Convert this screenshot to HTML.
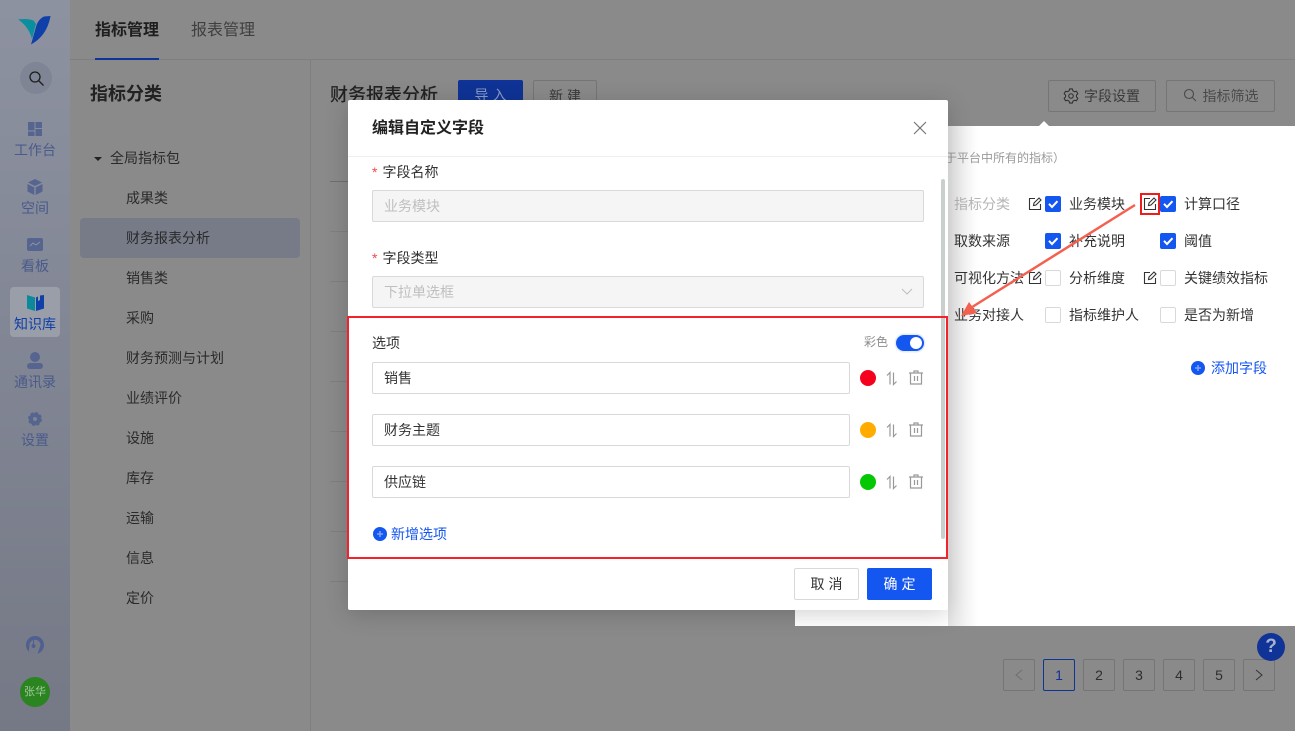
<!DOCTYPE html>
<html lang="zh-CN"><head><meta charset="utf-8"><style>
*{box-sizing:border-box}
html,body{margin:0;padding:0}
body{width:1295px;height:731px;overflow:hidden;position:relative;background:#8a8a8a;font-family:"Liberation Sans","Noto Sans CJK SC",sans-serif;font-size:14px;color:#333}
.a{position:absolute;white-space:nowrap}
.side{left:0;top:0;width:70px;height:731px;background:linear-gradient(#8d92a1,#757986)}
.nav{left:0;width:70px;text-align:center;color:#4a5a8a;font-size:14px;line-height:20px}
.cat{left:126px;color:#2a2a2a;line-height:20px}
.line{height:1px;background:#7f7f7f}
.btn{border:1px solid #757575;border-radius:2px;text-align:center;color:#3a3a3a}
.modal{left:348px;top:100px;width:600px;height:510px;background:#fff;border-radius:2px;box-shadow:0 4px 24px rgba(0,0,0,.18)}
.panel{left:795px;top:126px;width:500px;height:500px;background:#fff}
.fade{left:948px;top:126px;width:30px;height:500px;background:linear-gradient(90deg,#e4e4e4,#fff)}
.lab{color:#333;line-height:20px}
.cb{width:16px;height:16px;border:1px solid #d9d9d9;border-radius:2px;background:#fff}
.cb.on{background:#1456f0;border-color:#1456f0}
.cb.on svg{display:block}
.ipt{left:372px;width:478px;height:32px;border:1px solid #d9d9d9;border-radius:2px;padding-left:11px;line-height:30px;color:#333;background:#fff}
.dis{width:552px;background:#f5f5f5;color:#bfbfbf}
.dot{left:860px;width:16px;height:16px;border-radius:50%}
.pg{top:659px;width:32px;height:32px;border:1px solid #757575;border-radius:2px;text-align:center;line-height:30px;color:#2e2e2e;font-size:14px}
</style></head><body>
<div class="a side"></div>
<div class="a line" style="left:70px;top:59px;width:1225px"></div>
<div class="a" style="left:310px;top:60px;width:1px;height:671px;background:#7f7f7f"></div>
<svg class="a" style="left:17px;top:15px" width="35" height="31" viewBox="0 0 35 31"><path d="M1 4.500 C7 3.500 13 4 16.500 5.500 L19 9 L15 24 C13 16 8 9 1 4.500Z" fill="#0a8f9f"/><path d="M33.500 1 L27 1.500 C22 4 20 8 19 12 L14 29.500 C24 24 31 15 33.500 1Z" fill="#0f3fa8"/></svg>
<div class="a" style="left:20px;top:62px;width:32px;height:32px;border-radius:50%;background:#7f8595"></div>
<svg class="a" style="left:28px;top:70px" width="17" height="17" viewBox="0 0 17 17" fill="none" stroke="#1d1d1d" stroke-width="1.300"><circle cx="7" cy="7" r="5"/><path d="M11 11l4.500 4.500"/></svg>

<svg class="a" style="left:28px;top:122px" width="14" height="14"><path d="M0 0h6.500v8.500H0zM7.500 0H14v6H7.500zM7.500 7H14v7H7.500zM0 9.500h6.500V14H0z" fill="#56658f"/></svg>
<div class="a nav" style="top:140px">工作台</div>
<svg class="a" style="left:27px;top:179px" width="16" height="16"><path d="M8 0l7 3.500-7 3.500-7-3.500zM.5 5l6.800 3.400V16L.5 12.500zM15.500 5L8.700 8.400V16l6.800-3.500z" fill="#56658f"/></svg>
<div class="a nav" style="top:198px">空间</div>
<svg class="a" style="left:27px;top:238px" width="16" height="15"><path d="M2 0h12a2 2 0 0 1 2 2v9a2 2 0 0 1-2 2H2a2 2 0 0 1-2-2V2a2 2 0 0 1 2-2z" fill="#56658f"/><path d="M3 8l3-3 3 2 4-3" stroke="#8d93a3" fill="none"/></svg>
<div class="a nav" style="top:256px">看板</div>
<div class="a" style="left:10px;top:287px;width:50px;height:50px;border-radius:4px;background:#9a9ea8"></div>
<svg class="a" style="left:27px;top:295px" width="17" height="16"><path d="M0 0l8 2.500V16L0 13.500z" fill="#0a8a9a"/><path d="M9 2.500l2-1V6l2-1V.5l4-.5v13.500L9 16z" fill="#0f3fa8"/></svg>
<div class="a nav" style="top:314px;color:#0f3fa8">知识库</div>
<svg class="a" style="left:27px;top:352px" width="16" height="17"><circle cx="8" cy="5" r="5" fill="#56658f"/><rect y="11" width="16" height="6" rx="3" fill="#56658f"/></svg>
<div class="a nav" style="top:372px">通讯录</div>
<svg class="a" style="left:28px;top:412px" width="14" height="14"><circle cx="7" cy="7" r="4" fill="none" stroke="#56658f" stroke-width="4"/><circle cx="7" cy="7" r="6" fill="none" stroke="#56658f" stroke-width="2" stroke-dasharray="3 1.700"/></svg>
<div class="a nav" style="top:430px">设置</div>
<svg class="a" style="left:26px;top:636px" width="18" height="18"><circle cx="9" cy="9" r="9" fill="#4f5f90"/><path d="M2.500 18L3.500 9.500A5.500 5.500 0 0 1 14.500 9L11.500 18z" fill="#777b89"/><circle cx="7.500" cy="10" r="2" fill="#4f5f90"/><rect x="7" y="2" width="1" height="7" fill="#4f5f90"/></svg>
<div class="a" style="left:20px;top:677px;width:30px;height:30px;border-radius:50%;background:#2a8420;color:#a5c8a0;font-size:11px;line-height:30px;text-align:center">张华</div>

<div class="a" style="left:95px;top:20px;font-size:16px;font-weight:700;color:#1e1e1e;line-height:22px">指标管理</div>
<div class="a" style="left:95px;top:58px;width:64px;height:2px;background:#0f3396"></div>
<div class="a" style="left:191px;top:20px;font-size:16px;color:#3f3f3f;line-height:22px">报表管理</div>
<div class="a" style="left:90px;top:82px;font-size:18px;font-weight:700;color:#222;line-height:24px">指标分类</div>
<div class="a" style="left:94px;top:157px;width:0;height:0;border:4px solid transparent;border-top:4px solid #222;border-bottom:0"></div>
<div class="a" style="left:110px;top:148px;color:#2a2a2a;line-height:20px">全局指标包</div>
<div class="a" style="left:80px;top:218px;width:220px;height:40px;border-radius:4px;background:#777b88"></div>
<div class="a cat" style="top:188px">成果类</div>
<div class="a cat" style="top:228px">财务报表分析</div>
<div class="a cat" style="top:268px">销售类</div>
<div class="a cat" style="top:308px">采购</div>
<div class="a cat" style="top:348px">财务预测与计划</div>
<div class="a cat" style="top:388px">业绩评价</div>
<div class="a cat" style="top:428px">设施</div>
<div class="a cat" style="top:468px">库存</div>
<div class="a cat" style="top:508px">运输</div>
<div class="a cat" style="top:548px">信息</div>
<div class="a cat" style="top:588px">定价</div>

<div class="a" style="left:330px;top:83px;font-size:18px;font-weight:500;color:#222;line-height:24px">财务报表分析</div>
<div class="a" style="left:458px;top:80px;width:65px;height:32px;border-radius:2px;background:#0f3396;color:#8a9bc8;text-align:center;line-height:30px;letter-spacing:4px;padding-left:4px">导入</div>
<div class="a btn" style="left:533px;top:80px;width:64px;height:32px;line-height:30px;letter-spacing:4px;padding-left:4px">新建</div>
<div class="a line" style="left:330px;top:181px;width:20px;background:#6f6f6f"></div>
<div class="a line" style="left:330px;top:231px;width:20px"></div>
<div class="a line" style="left:330px;top:281px;width:20px"></div>
<div class="a line" style="left:330px;top:331px;width:20px"></div>
<div class="a line" style="left:330px;top:381px;width:20px"></div>
<div class="a line" style="left:330px;top:431px;width:20px"></div>
<div class="a line" style="left:330px;top:481px;width:20px"></div>
<div class="a line" style="left:330px;top:531px;width:20px"></div>
<div class="a line" style="left:330px;top:581px;width:20px"></div>

<div class="a btn" style="left:1048px;top:80px;width:108px;height:32px;line-height:30px;padding-left:20px">字段设置</div>
<svg class="a" style="left:1063px;top:88px" width="16" height="16" viewBox="0 0 16 17" fill="none" stroke="#2e2e2e" stroke-width="1.100" stroke-linejoin="round"><path d="M6.500 1H9.500L10 3L11.800 4L13.800 3.400L15.300 6L13.800 7.500V9.500L15.300 11L13.800 13.600L11.800 13L10 14L9.500 16H6.500L6 14L4.200 13L2.200 13.600L.7 11L2.200 9.500V7.500L.7 6L2.200 3.400L4.200 4L6 3Z"/><circle cx="8" cy="8.500" r="2.400"/></svg>
<div class="a btn" style="left:1166px;top:80px;width:109px;height:32px;line-height:30px;padding-left:20px;color:#4a4a4a">指标筛选</div>
<svg class="a" style="left:1183px;top:88px" width="14" height="14" viewBox="0 0 14 14" fill="none" stroke="#4a4a4a" stroke-width="1.100"><circle cx="6" cy="6" r="4.500"/><path d="M9.500 9.500L13 13"/></svg>

<div class="a" style="left:1039px;top:121px;width:0;height:0;border:5px solid transparent;border-bottom:5px solid #fff;border-top:0"></div>
<div class="a panel"></div>
<div class="a fade"></div>
<div class="a" style="left:948px;top:150px;font-size:12px;color:#9a9a9a;line-height:16px;overflow:hidden;width:130px"><span style="margin-left:-3px">于平台中所有的指标）</span></div>

<div class="a lab" style="left:954px;top:194px;color:#b5b5b5">指标分类</div>
<div class="a lab" style="left:1069px;top:194px">业务模块</div>
<div class="a lab" style="left:1184px;top:194px">计算口径</div>
<div class="a lab" style="left:954px;top:231px">取数来源</div>
<div class="a lab" style="left:1069px;top:231px">补充说明</div>
<div class="a lab" style="left:1184px;top:231px">阈值</div>
<div class="a lab" style="left:954px;top:268px">可视化方法</div>
<div class="a lab" style="left:1069px;top:268px">分析维度</div>
<div class="a lab" style="left:1184px;top:268px">关键绩效指标</div>
<div class="a lab" style="left:954px;top:305px">业务对接人</div>
<div class="a lab" style="left:1069px;top:305px">指标维护人</div>
<div class="a lab" style="left:1184px;top:305px">是否为新增</div>

<div class="a cb on" style="left:1045px;top:196px"><svg width="14" height="14"><path d="M3 6.800l3 3.200 5.500-5.800" fill="none" stroke="#fff" stroke-width="2"/></svg></div>
<div class="a cb on" style="left:1160px;top:196px"><svg width="14" height="14"><path d="M3 6.800l3 3.200 5.500-5.800" fill="none" stroke="#fff" stroke-width="2"/></svg></div>
<div class="a cb on" style="left:1045px;top:233px"><svg width="14" height="14"><path d="M3 6.800l3 3.200 5.500-5.800" fill="none" stroke="#fff" stroke-width="2"/></svg></div>
<div class="a cb on" style="left:1160px;top:233px"><svg width="14" height="14"><path d="M3 6.800l3 3.200 5.500-5.800" fill="none" stroke="#fff" stroke-width="2"/></svg></div>
<div class="a cb" style="left:1045px;top:270px"></div>
<div class="a cb" style="left:1160px;top:270px"></div>
<div class="a cb" style="left:1045px;top:307px"></div>
<div class="a cb" style="left:1160px;top:307px"></div>

<svg class="a" style="left:1028px;top:197px" width="14" height="14" viewBox="0 0 14 14" fill="none" stroke="#333" stroke-width="1.100"><path d="M7 1.500H1.500v11h11V7"/><path d="M5.500 8.500l.5-2.500L11 1l2 2-5 5z"/></svg>
<svg class="a" style="left:1143px;top:197px" width="14" height="14" viewBox="0 0 14 14" fill="none" stroke="#333" stroke-width="1.100"><path d="M7 1.500H1.500v11h11V7"/><path d="M5.500 8.500l.5-2.500L11 1l2 2-5 5z"/></svg>
<svg class="a" style="left:1028px;top:271px" width="14" height="14" viewBox="0 0 14 14" fill="none" stroke="#333" stroke-width="1.100"><path d="M7 1.500H1.500v11h11V7"/><path d="M5.500 8.500l.5-2.500L11 1l2 2-5 5z"/></svg>
<svg class="a" style="left:1143px;top:271px" width="14" height="14" viewBox="0 0 14 14" fill="none" stroke="#333" stroke-width="1.100"><path d="M7 1.500H1.500v11h11V7"/><path d="M5.500 8.500l.5-2.500L11 1l2 2-5 5z"/></svg>
<div class="a" style="left:1140px;top:193px;width:20px;height:22px;border:2px solid #f01c1c"></div>

<svg class="a" style="left:1191px;top:361px" width="14" height="14"><circle cx="7" cy="7" r="7" fill="#1456f0"/><path d="M4 7h6M7 4v6" stroke="#7ea4f7" stroke-width="1.500"/></svg>
<div class="a" style="left:1211px;top:358px;color:#1456f0;line-height:20px">添加字段</div>

<div class="a modal"></div>
<div class="a" style="left:372px;top:118px;font-size:16px;font-weight:700;color:#222;line-height:22px">编辑自定义字段</div>
<svg class="a" style="left:913px;top:121px" width="14" height="14" fill="none" stroke="#777" stroke-width="1.200"><path d="M1 1l12 12M13 1L1 13"/></svg>
<div class="a" style="left:348px;top:156px;width:600px;height:1px;background:#eee"></div>

<div class="a" style="left:372px;top:162px;line-height:20px"><span style="color:#f5484d">*</span><span style="margin-left:5px">字段名称</span></div>
<div class="a ipt dis" style="top:190px">业务模块</div>
<div class="a" style="left:372px;top:248px;line-height:20px"><span style="color:#f5484d">*</span><span style="margin-left:5px">字段类型</span></div>
<div class="a ipt dis" style="top:276px">下拉单选框</div>
<svg class="a" style="left:901px;top:288px" width="12" height="8" fill="none" stroke="#bfbfbf"><path d="M1 1l5 5 5-5"/></svg>

<div class="a" style="left:372px;top:333px;line-height:20px">选项</div>
<div class="a" style="left:864px;top:334px;font-size:12px;color:#8c8c8c;line-height:17px">彩色</div>
<div class="a" style="left:896px;top:335px;width:28px;height:16px;border-radius:8px;background:#1456f0;box-shadow:0 0 0 1.500px #e3edff"></div>
<div class="a" style="left:910px;top:337px;width:12px;height:12px;border-radius:50%;background:#fff"></div>

<div class="a ipt" style="top:362px">销售</div>
<div class="a ipt" style="top:414px">财务主题</div>
<div class="a ipt" style="top:466px">供应链</div>
<div class="a dot" style="top:370px;background:#f5001d"></div>
<div class="a dot" style="top:422px;background:#ffab00"></div>
<div class="a dot" style="top:474px;background:#04c804"></div>

<svg class="a" style="left:885px;top:371px" width="14" height="15" fill="none" stroke="#999" stroke-width="1.200"><path d="M2 4.500l3-3v12M8.500 1.500v12l3-3"/></svg>
<svg class="a" style="left:885px;top:423px" width="14" height="15" fill="none" stroke="#999" stroke-width="1.200"><path d="M2 4.500l3-3v12M8.500 1.500v12l3-3"/></svg>
<svg class="a" style="left:885px;top:475px" width="14" height="15" fill="none" stroke="#999" stroke-width="1.200"><path d="M2 4.500l3-3v12M8.500 1.500v12l3-3"/></svg>
<svg class="a" style="left:909px;top:370px" width="14" height="15" fill="none" stroke="#999" stroke-width="1.200"><path d="M0 3h14M5 3V1h4v2M1.500 3v11h11V3M5.500 6v5M8.500 6v5"/></svg>
<svg class="a" style="left:909px;top:422px" width="14" height="15" fill="none" stroke="#999" stroke-width="1.200"><path d="M0 3h14M5 3V1h4v2M1.500 3v11h11V3M5.500 6v5M8.500 6v5"/></svg>
<svg class="a" style="left:909px;top:474px" width="14" height="15" fill="none" stroke="#999" stroke-width="1.200"><path d="M0 3h14M5 3V1h4v2M1.500 3v11h11V3M5.500 6v5M8.500 6v5"/></svg>

<svg class="a" style="left:373px;top:527px" width="14" height="14"><circle cx="7" cy="7" r="7" fill="#1456f0"/><path d="M4 7h6M7 4v6" stroke="#7ea4f7" stroke-width="1.500"/></svg>
<div class="a" style="left:391px;top:524px;color:#1456f0;line-height:20px">新增选项</div>
<div class="a" style="left:941px;top:179px;width:4px;height:360px;border-radius:2px;background:#c9cfcf"></div>

<div class="a" style="left:347px;top:316px;width:601px;height:243px;border:2px solid #f5222d"></div>

<div class="a" style="left:794px;top:568px;width:65px;height:32px;border:1px solid #d9d9d9;border-radius:2px;text-align:center;line-height:30px;letter-spacing:4px;padding-left:4px;background:#fff">取消</div>
<div class="a" style="left:867px;top:568px;width:65px;height:32px;border-radius:2px;background:#1456f0;color:#fff;text-align:center;line-height:32px;letter-spacing:4px;padding-left:4px">确定</div>

<svg class="a" style="left:955px;top:195px" width="185" height="125"><path d="M180 10L14 114" stroke="#f4604f" stroke-width="2.500" fill="none"/><path d="M6 121L14 107L22 118z" fill="#f4604f"/></svg>

<div class="a pg" style="left:1003px"><svg width="8" height="12" style="margin-top:9px" fill="none" stroke="#6f6f6f"><path d="M7 1L1 6l6 5"/></svg></div>
<div class="a pg" style="left:1043px;border-color:#0f3396;color:#0f3396">1</div>
<div class="a pg" style="left:1083px">2</div>
<div class="a pg" style="left:1123px">3</div>
<div class="a pg" style="left:1163px">4</div>
<div class="a pg" style="left:1203px">5</div>
<div class="a pg" style="left:1243px"><svg width="8" height="12" style="margin-top:9px" fill="none" stroke="#333"><path d="M1 1l6 5-6 5"/></svg></div>
<div class="a" style="left:1257px;top:633px;width:28px;height:28px;border-radius:50%;background:#0f3396;color:#a7b1cf;font-size:19px;font-weight:700;line-height:28px;text-align:center">?</div>
</body></html>
